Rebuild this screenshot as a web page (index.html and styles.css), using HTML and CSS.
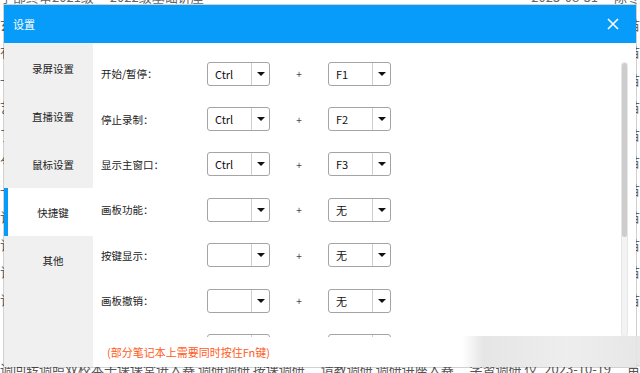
FILE: index.html
```html
<!DOCTYPE html>
<html lang="zh-CN">
<head>
    <meta charset="UTF-8">
    <meta name="viewport" content="width=device-width, initial-scale=1.0">
    <title>设置</title>
    <link rel="stylesheet" href="styles.css">
</head>
<body>
    <!-- page behind the dialog -->
    <div class="page">
        <div class="page-row top-row"><span>学部终审2021级 　2022级基础讲座</span><span class="date">2023-08-31 　陈冬</span></div>
        <div class="page-row"><span>玄</span><span class="date">2023-08-31 　苗</span></div>
        <div class="page-row"><span>有</span><span class="date">2023-08-31 　苗</span></div>
        <div class="page-row"><span>一</span><span class="date">2023-08-31 　苗</span></div>
        <div class="page-row"><span>艺</span><span class="date">2023-08-31 　苗</span></div>
        <div class="page-row"><span>了</span><span class="date">2023-08-31 　苗</span></div>
        <div class="page-row"><span>兮</span><span class="date">2023-08-31 　苗</span></div>
        <div class="page-row"><span>一</span><span class="date">2023-08-31 　苗</span></div>
        <div class="page-row"><span>订</span><span class="date">2023-10-19 　苗</span></div>
        <div class="page-row"><span>订</span><span class="date">2023-10-19 　苗</span></div>
        <div class="page-row"><span>订</span><span class="date">2023-10-19 　苗</span></div>
        <div class="page-row"><span>订</span><span class="date">2023-10-19 　苗</span></div>
        <div class="page-row bottom-row"><span>调回转调照双校本子课课堂进入赛 调研调研 按课调研 　请教调研 调研讲座入赛 　学習调研 仪</span><span class="date">2023-10-19 　苗</span></div>
    </div>

    <div class="dialog">
        <div class="dialog-title">
            <span>设置</span>
            <svg class="close" width="12" height="12" viewBox="0 0 12 12">
                <path d="M1 1 L11 11 M11 1 L1 11" stroke="#fff" stroke-width="1.6" fill="none"/>
            </svg>
        </div>
        <div class="dialog-body">
            <div class="sidebar">
                <div class="nav-item">录屏设置</div>
                <div class="nav-item">直播设置</div>
                <div class="nav-item">鼠标设置</div>
                <div class="nav-item active">快捷键</div>
                <div class="nav-item">其他</div>
            </div>
            <div class="content">
                <div class="row">
                    <div class="label">开始/暂停：</div>
                    <div class="select"><span class="value">Ctrl</span><span class="arrow"></span></div>
                    <div class="plus">+</div>
                    <div class="select"><span class="value">F1</span><span class="arrow"></span></div>
                </div>
                <div class="row">
                    <div class="label">停止录制：</div>
                    <div class="select"><span class="value">Ctrl</span><span class="arrow"></span></div>
                    <div class="plus">+</div>
                    <div class="select"><span class="value">F2</span><span class="arrow"></span></div>
                </div>
                <div class="row">
                    <div class="label">显示主窗口：</div>
                    <div class="select"><span class="value">Ctrl</span><span class="arrow"></span></div>
                    <div class="plus">+</div>
                    <div class="select"><span class="value">F3</span><span class="arrow"></span></div>
                </div>
                <div class="row">
                    <div class="label">画板功能：</div>
                    <div class="select"><span class="value"></span><span class="arrow"></span></div>
                    <div class="plus">+</div>
                    <div class="select"><span class="value">无</span><span class="arrow"></span></div>
                </div>
                <div class="row">
                    <div class="label">按键显示：</div>
                    <div class="select"><span class="value"></span><span class="arrow"></span></div>
                    <div class="plus">+</div>
                    <div class="select"><span class="value">无</span><span class="arrow"></span></div>
                </div>
                <div class="row">
                    <div class="label">画板撤销：</div>
                    <div class="select"><span class="value"></span><span class="arrow"></span></div>
                    <div class="plus">+</div>
                    <div class="select"><span class="value">无</span><span class="arrow"></span></div>
                </div>
                <div class="row">
                    <div class="label"></div>
                    <div class="select"><span class="value"></span><span class="arrow"></span></div>
                    <div class="plus"></div>
                    <div class="select"><span class="value"></span><span class="arrow"></span></div>
                </div>

                <div class="note">(部分笔记本上需要同时按住Fn键)</div>
                <div class="scrollbar"><div class="thumb"></div></div>
            </div>
        </div>
    </div>

    <div class="watermark"></div>
</body>
</html>
```

FILE: styles.css
```css
/* General */
body {
    margin: 0;
    padding: 0;
    width: 640px;
    height: 373px;
    overflow: hidden;
    position: relative;
    background: #fff;
    font-family: "Noto Sans CJK SC", "Liberation Sans", sans-serif;
}

/* Page behind */
.page {
    color: #666;
    font-size: 13px;
}

.page-row {
    height: 27.5px;
    line-height: 27.5px;
    display: flex;
    justify-content: space-between;
    white-space: nowrap;
}

.top-row {
    margin-top: -17px;
}

.bottom-row {
    margin-top: 42px;
    color: #555;
}

/* Dialog */
.dialog {
    position: absolute;
    left: 4px;
    top: 5px;
    width: 632px;
    height: 362px;
    background: #fff;
    box-shadow: 0 0 0 1px rgba(0, 0, 0, 0.18);
    display: flex;
    flex-direction: column;
    overflow: hidden;
}

.dialog-title {
    height: 38px;
    background: #079cfa;
    color: #fff;
    font-size: 11px;
    display: flex;
    align-items: center;
    justify-content: space-between;
    padding: 0 17px 0 9px;
    flex-shrink: 0;
}

.close {
    display: block;
}

.dialog-body {
    flex: 1;
    display: flex;
    min-height: 0;
}

/* Sidebar */
.sidebar {
    width: 89px;
    background: #f0f0f0;
    padding-top: 1px;
    flex-shrink: 0;
}

.nav-item {
    height: 48px;
    display: flex;
    align-items: center;
    justify-content: center;
    padding-left: 9px;
    font-size: 10.5px;
    color: #222;
    box-sizing: border-box;
}

.nav-item.active {
    background: #fff;
    border-left: 4px solid #079cfa;
    padding-left: 5px;
}

/* Content */
.content {
    flex: 1;
    position: relative;
    padding: 8px 0 0 8px;
    overflow: hidden;
}

.row {
    height: 45.4px;
    display: flex;
    align-items: center;
}

.label {
    width: 106px;
    font-size: 10.5px;
    color: #222;
}

.select {
    width: 63px;
    height: 24px;
    box-sizing: border-box;
    border: 1px solid #a4a4a4;
    border-radius: 3px;
    display: flex;
    font-size: 11px;
    color: #111;
}

.select .value {
    width: 44px;
    padding-left: 7px;
    box-sizing: border-box;
    border-right: 1px solid #cfcfcf;
    line-height: 22px;
}

.select .arrow {
    flex: 1;
    display: flex;
    align-items: center;
    justify-content: center;
}

.select .arrow::after {
    content: "";
    border-left: 4px solid transparent;
    border-right: 4px solid transparent;
    border-top: 4px solid #111;
}

.plus {
    width: 58px;
    text-align: center;
    font-size: 10px;
    color: #444;
}

/* Note over the last row */
.note {
    position: absolute;
    left: 0;
    right: 0;
    bottom: 0;
    height: 30px;
    background: #fff;
    color: #ff5b24;
    font-size: 11px;
    line-height: 30px;
    padding-left: 14px;
}

/* Scrollbar */
.scrollbar {
    position: absolute;
    right: 8px;
    top: 19px;
    width: 7px;
    height: 275px;
    background: #f3f3f3;
    border: 1px solid #e6e6e6;
    border-radius: 4px;
    box-sizing: border-box;
}

.thumb {
    height: 174px;
    background: #cdcdcd;
    border-radius: 3px;
}

/* Blurred watermark */
.watermark {
    position: absolute;
    left: 462px;
    top: 336px;
    width: 178px;
    height: 31px;
    background: linear-gradient(to right, rgba(225, 225, 225, 0), rgba(225, 225, 225, 0.85) 12%, rgba(236, 236, 236, 0.9) 60%, rgba(228, 228, 228, 0.9));
}
```
